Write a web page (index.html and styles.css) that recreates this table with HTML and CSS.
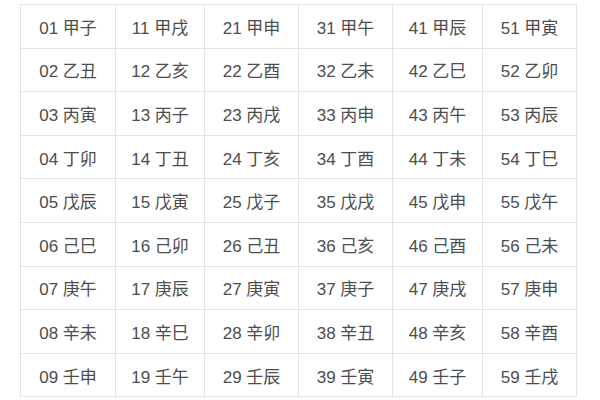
FILE: index.html
```html
<!DOCTYPE html>
<html lang="zh">
<head>
<meta charset="utf-8">
<link rel="stylesheet" href="styles.css">
</head>
<body>
<table class="cycle">
  <colgroup>
    <col class="c1"><col class="c2"><col class="c3"><col class="c4"><col class="c5"><col class="c6">
  </colgroup>
  <tbody>
    <tr><td>01 甲子</td><td>11 甲戌</td><td>21 甲申</td><td>31 甲午</td><td>41 甲辰</td><td>51 甲寅</td></tr>
    <tr><td>02 乙丑</td><td>12 乙亥</td><td>22 乙酉</td><td>32 乙未</td><td>42 乙巳</td><td>52 乙卯</td></tr>
    <tr><td>03 丙寅</td><td>13 丙子</td><td>23 丙戌</td><td>33 丙申</td><td>43 丙午</td><td>53 丙辰</td></tr>
    <tr><td>04 丁卯</td><td>14 丁丑</td><td>24 丁亥</td><td>34 丁酉</td><td>44 丁未</td><td>54 丁巳</td></tr>
    <tr><td>05 戊辰</td><td>15 戊寅</td><td>25 戊子</td><td>35 戊戌</td><td>45 戊申</td><td>55 戊午</td></tr>
    <tr><td>06 己巳</td><td>16 己卯</td><td>26 己丑</td><td>36 己亥</td><td>46 己酉</td><td>56 己未</td></tr>
    <tr><td>07 庚午</td><td>17 庚辰</td><td>27 庚寅</td><td>37 庚子</td><td>47 庚戌</td><td>57 庚申</td></tr>
    <tr><td>08 辛未</td><td>18 辛巳</td><td>28 辛卯</td><td>38 辛丑</td><td>48 辛亥</td><td>58 辛酉</td></tr>
    <tr><td>09 壬申</td><td>19 壬午</td><td>29 壬辰</td><td>39 壬寅</td><td>49 壬子</td><td>59 壬戌</td></tr>
  </tbody>
</table>
</body>
</html>
```
FILE: styles.css
```css
html, body {
  margin: 0;
  background: #ffffff;
}
body {
  padding: 4px 0 0 20px;
  overflow: hidden;
  height: 400px;
  box-sizing: border-box;
}
.cycle {
  border-collapse: collapse;
  table-layout: fixed;
  width: 556px;
  font-family: "Liberation Sans", "Noto Sans CJK SC", sans-serif;
  font-size: 17px;
  color: #4d4d4d;
}
.c1 { width: 95px; }
.c2 { width: 89px; }
.c3 { width: 94px; }
.c4 { width: 94px; }
.c5 { width: 90px; }
.c6 { width: 94px; }
.cycle tr {
  height: 43.6px;
}
.cycle td {
  border: 1px solid #e3e3e3;
  text-align: center;
  vertical-align: middle;
  padding: 0;
  white-space: nowrap;
}
```
